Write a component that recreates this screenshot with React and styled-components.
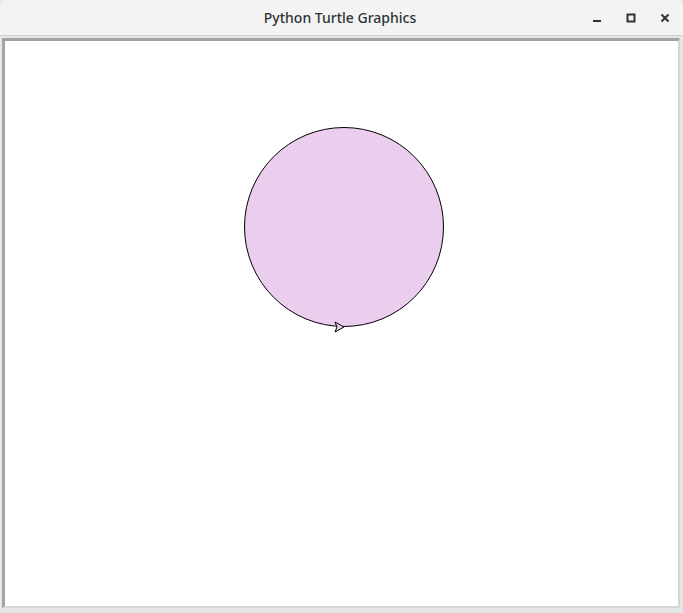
import React from 'react';
import styled, { createGlobalStyle } from 'styled-components';

const GlobalStyle = createGlobalStyle`
  html, body {
    margin: 0;
    padding: 0;
    background: #ffffff;
  }
  *, *::before, *::after {
    box-sizing: border-box;
  }
`;

const Window = styled.div`
  width: 683px;
  height: 613px;
  display: flex;
  flex-direction: column;
  background: #e6e6e6;
  font-family: 'Noto Sans', 'DejaVu Sans', sans-serif;
`;

const TitleBar = styled.div`
  height: 36px;
  flex-shrink: 0;
  display: flex;
  align-items: center;
  justify-content: center;
  position: relative;
  background: #f3f3f3;
  border-bottom: 1px solid #cfcfcf;
  border-radius: 6px 6px 0 0;
`;

const Title = styled.span`
  font-size: 14px;
  font-weight: 500;
  color: #2e3436;
  margin-left: -3px;
  margin-top: -1px;
`;

const Controls = styled.div`
  position: absolute;
  right: 8px;
  top: 10px;
  display: flex;
  gap: 14px;
`;

const ControlButton = styled.div`
  width: 20px;
  height: 16px;
  display: flex;
  align-items: center;
  justify-content: center;
`;

const Frame = styled.div`
  flex: 1;
  padding: 2px 3px 5px 2px;
  background: #e6e6e6;
  display: flex;
`;

const Canvas = styled.div`
  flex: 1;
  background: #ffffff;
  border-top: 3px solid #a4a4a4;
  border-left: 3px solid #a4a4a4;
  border-right: 2px solid #d6d6d6;
  border-bottom: 2px solid #d6d6d6;
  position: relative;
`;

const Drawing = styled.svg`
  display: block;
  width: 100%;
  height: 100%;
`;

const Minimize = () => (
  <svg width="10" height="10" viewBox="0 0 10 10">
    <rect x="1" y="7" width="8" height="2" fill="#2e3436" />
  </svg>
);

const Maximize = () => (
  <svg width="10" height="10" viewBox="0 0 10 10">
    <rect x="1.5" y="1.5" width="7" height="7" fill="none" stroke="#2e3436" strokeWidth="2" />
  </svg>
);

const Close = () => (
  <svg width="10" height="10" viewBox="0 0 10 10">
    <path d="M1.5 1.5 L8.5 8.5 M8.5 1.5 L1.5 8.5" stroke="#2e3436" strokeWidth="2" />
  </svg>
);

// canvas origin sits at page (5, 41)
const cx = 344 - 5;
const cy = 227 - 41;

export default function App() {
  return (
    <>
      <GlobalStyle />
      <Window>
        <TitleBar>
          <Title>Python Turtle Graphics</Title>
          <Controls>
            <ControlButton><Minimize /></ControlButton>
            <ControlButton><Maximize /></ControlButton>
            <ControlButton><Close /></ControlButton>
          </Controls>
        </TitleBar>
        <Frame>
          <Canvas>
            <Drawing>
              <circle cx={cx} cy={cy} r="99.5" fill="#ebcdee" stroke="#000" strokeWidth="1" />
              <polygon
                points={`${cx},${cy + 100} ${cx - 9},${cy + 95} ${cx - 7},${cy + 100} ${cx - 9},${cy + 105}`}
                fill="#ebcdee"
                stroke="#000"
                strokeWidth="1"
              />
            </Drawing>
          </Canvas>
        </Frame>
      </Window>
    </>
  );
}
